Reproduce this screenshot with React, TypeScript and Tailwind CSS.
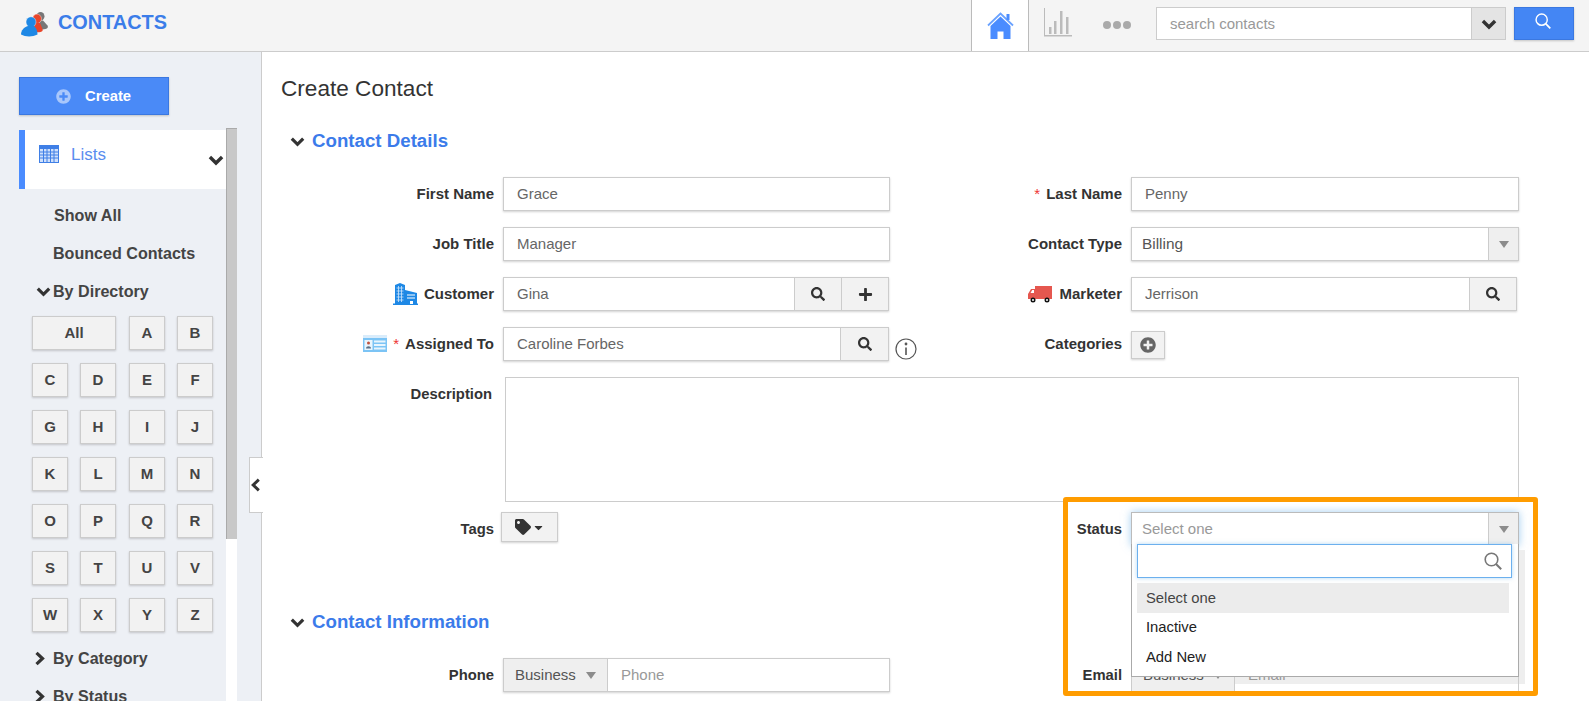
import React from "react";
import { FaSearch, FaPlus, FaPlusCircle, FaTag, FaCaretDown } from "react-icons/fa";

const F = "font-['Liberation_Sans',Arial,sans-serif]";
const box = "border border-[#ccc] shadow-[0_1px_2px_rgba(0,0,0,0.18)]";

function Logo() {
  return (
    <svg width="28" height="25" viewBox="0 0 28 25">
      <ellipse cx="19.500" cy="4.300" rx="4" ry="4.300" fill="#777" />
      <path d="M17 8.500h5l4.500 5c1 1.500 0 3-2 3.500-2 .5-4 .5-6 0z" fill="#777" />
      <ellipse cx="16" cy="6.800" rx="4.500" ry="4.700" fill="#e8452a" stroke="#fff" strokeWidth="0.400" />
      <path d="M13 11h6l2.500 6c.5 1.500 0 2.500-2 3-2 .5-4 .5-7-.5z" fill="#e8452a" />
      <ellipse cx="10" cy="10" rx="5" ry="5.200" fill="#1e88e5" stroke="#fff" strokeWidth="0.400" />
      <path d="M0 22.500c0-4 3-7.500 7-8.500h6c2.500 2 3.500 5 3.500 8.500-5 2.500-12 2.500-16.500 0z" fill="#1e88e5" />
    </svg>
  );
}

function Home() {
  return (
    <svg width="27" height="27" viewBox="0 0 27 27">
      <path d="M1 13.500L13.500 1.500 26 13.500" fill="none" stroke="#6aa2ff" strokeWidth="1.800" />
      <rect x="19.500" y="2" width="3" height="6" fill="#4a8cff" />
      <path d="M3.500 14L13.500 4.500 23.500 14v13H16.500v-7.500h-6V27h-7z" fill="#4a8cff" />
    </svg>
  );
}

function Chev({ dir = "down", size = 15, color = "#333" }: { dir?: "down" | "right" | "left"; size?: number; color?: string }) {
  const d = dir === "down" ? "M1.800 3.200L7.500 8.800 13.200 3.200" : dir === "right" ? "M4.500 1.800L10.500 7.500 4.500 13.200" : "M10.500 1.800L4.500 7.500 10.500 13.200";
  return (
    <svg width={size} height={size} viewBox={dir === "down" ? "0 0 15 12" : "0 0 15 15"} className="shrink-0" fill="none" stroke={color} strokeWidth="3.200">
      <path d={d} />
    </svg>
  );
}

function Chart() {
  return (
    <svg width="28" height="29" viewBox="0 0 28 29" fill="#bbb">
      <rect x="0" y="0" width="1" height="28" />
      <rect x="0" y="27" width="28" height="1.500" />
      <rect x="5" y="19" width="2.500" height="7" />
      <rect x="10" y="13" width="2.500" height="13" />
      <rect x="16" y="3" width="2.500" height="23" />
      <rect x="22" y="9" width="2.500" height="17" />
    </svg>
  );
}

function ThinSearch({ color, size }: { color: string; size: number }) {
  return (
    <svg width={size} height={size} viewBox="0 0 18 18" fill="none" stroke={color} strokeWidth="1.600">
      <circle cx="7.500" cy="7.500" r="6.300" />
      <path d="M12 12l5.200 5.200" strokeWidth="2" />
    </svg>
  );
}

function Calendar() {
  return (
    <svg width="20" height="18" viewBox="0 0 20 18">
      <rect width="20" height="18" fill="#3f7fe6" />
      <rect x="1" y="4" width="18" height="13" fill="#cfe0fb" />
      <path d="M1 7h18M1 10h18M1 13h18M4.500 4v13M8 4v13M11.500 4v13M15 4v13" stroke="#3f7fe6" strokeWidth="1" />
    </svg>
  );
}

function Building() {
  return (
    <svg width="25" height="22" viewBox="0 0 25 22" fill="#1e88e5">
      <path d="M2 2l5-2 5 2v20H2z" />
      <path d="M12 7l12 3v12H12z" />
      <rect x="0" y="20.500" width="25" height="1.500" />
      <path d="M3.500 5h7M3.500 8h7M3.500 11h7M3.500 14h7M3.500 17h7M5.500 3v16M8.500 3v16" stroke="#cfe6fb" strokeWidth="0.800" />
      <path d="M14 12h8M14 15h8" stroke="#fff" strokeWidth="1.200" />
      <rect x="17" y="18" width="3" height="3" fill="#fff" />
    </svg>
  );
}

function Card() {
  return (
    <svg width="24" height="18" viewBox="0 0 24 18">
      <rect width="24" height="3" fill="#d9ecfb" />
      <rect y="3" width="24" height="14" fill="#7cc4f5" />
      <rect x="1.500" y="5" width="8" height="10" fill="#e9f5fd" />
      <circle cx="5.500" cy="8" r="1.500" fill="#c0533f" />
      <path d="M3 13.500c0-3 5-3 5 0z" fill="#5a6f85" />
      <path d="M11 6.500h11.500M11 10h11.500M11 13.500h11.500" stroke="#e9f5fd" strokeWidth="1.800" />
    </svg>
  );
}

function Truck() {
  return (
    <svg width="24" height="17" viewBox="0 0 24 17">
      <path d="M7 0h17v13H0V8l3-5h4z" fill="#e5574f" />
      <path d="M2.500 7l1.700-3H6v3z" fill="#fff" />
      <circle cx="5" cy="14" r="2.500" fill="#111" />
      <circle cx="5" cy="14" r="1" fill="#fff" />
      <circle cx="19" cy="14" r="2.500" fill="#111" />
      <circle cx="19" cy="14" r="1" fill="#fff" />
    </svg>
  );
}

function Info() {
  return (
    <svg width="22" height="22" viewBox="0 0 22 22" fill="none" stroke="#555" strokeWidth="1.200">
      <circle cx="11" cy="11" r="10" />
      <path d="M11 9.500v7.500" strokeWidth="1.600" />
      <circle cx="11" cy="6" r="0.800" fill="#555" />
    </svg>
  );
}

function Arrow() {
  return <div className="w-0 h-0 border-x-[5px] border-x-transparent border-t-[7px] border-t-[#8c8c8c]" />;
}

function Label({ children }: { children: React.ReactNode }) {
  return (
    <div className="w-[232px] mr-[9px] shrink-0 flex items-center justify-end text-[15px] font-bold text-[#333] whitespace-nowrap">
      {children}
    </div>
  );
}

function TextBox({ value, w = "w-[387px]" }: { value: string; w?: string }) {
  return (
    <div className={`${box} ${w} h-[34px] shrink-0 bg-white flex items-center pl-[13px] text-[15px] text-[#666]`}>{value}</div>
  );
}

function IconBtn({ w, children }: { w: string; children: React.ReactNode }) {
  return <div className={`${w} h-full bg-[#f2f2f2] border-l border-[#ccc] flex items-center justify-center text-[#333]`}>{children}</div>;
}

function SectionHead({ title }: { title: string }) {
  return (
    <div className="h-[32px] flex items-center pl-[28px]">
      <Chev size={15} />
      <span className="ml-[7px] text-[18.700px] font-bold text-[#3b7bea]">{title}</span>
    </div>
  );
}

function Row({ left, right, className }: { left: React.ReactNode; right: React.ReactNode; className?: string }) {
  return (
    <div className={`flex ${className ?? "h-[34px] mb-[16px]"}`}>
      <div className="w-[628px] shrink-0 flex">{left}</div>
      <div className="flex-1 flex">{right}</div>
    </div>
  );
}

function Letter({ c, wide }: { c: string; wide?: boolean }) {
  return (
    <div className={wide ? "col-span-2" : ""}>
      <div className={`${box} ${wide ? "w-[84px]" : "w-[36px]"} h-[34px] bg-[#f2f2f2] flex items-center justify-center text-[15px] font-bold text-[#444]`}>{c}</div>
    </div>
  );
}

export default function App() {
  const rows = ["C","D","E","F","G","H","I","J","K","L","M","N","O","P","Q","R","S","T","U","V","W","X","Y","Z"];
  return (
    <div className={`${F} w-[1589px] h-[701px] overflow-hidden flex flex-col bg-white`}>
      <header className="h-[52px] shrink-0 bg-[#f4f4f4] border-b border-[#ccc] flex">
        <div className="ml-[21px] mt-[12px]"><Logo /></div>
        <div className="ml-[9px] mt-[10px] text-[19.900px] leading-[24px] font-bold text-[#3b7de9]">CONTACTS</div>
        <div className="ml-auto flex items-start pr-[15px]">
          <div className="w-[58px] h-[51px] bg-white border-x border-[#bbb] flex items-center justify-center">
            <Home />
          </div>
          <div className="ml-[15px] mt-[8px]"><Chart /></div>
          <div className="ml-[31px] mt-[21px] flex gap-[2px]">
            <span className="w-[8px] h-[8px] rounded-full bg-[#aaa]" />
            <span className="w-[8px] h-[8px] rounded-full bg-[#aaa]" />
            <span className="w-[8px] h-[8px] rounded-full bg-[#aaa]" />
          </div>
          <div className="ml-[25px] mt-[7px] w-[350px] h-[33px] bg-white border border-[#ccc] flex">
            <div className="flex-1 pl-[13px] pt-[2px] flex items-center text-[15px] text-[#999]">search contacts</div>
            <div className="w-[34px] bg-[#e4e4e4] border-l border-[#ccc] flex items-center justify-center">
              <Chev size={16} />
            </div>
          </div>
          <div className="ml-[8px] mt-[7px] w-[60px] h-[33px] bg-[#4486f4] border border-[#3b78e0] flex items-start justify-center pt-[5px] pr-[3px] shadow-[0_1px_2px_rgba(0,0,0,0.2)]">
            <ThinSearch color="#fff" size={16} />
          </div>
        </div>
      </header>
      <div className="relative flex-1 flex min-h-0">
        <aside className="w-[262px] shrink-0 bg-[#edf0f5] border-r border-[#ccc] flex flex-col">
          <div className="ml-[19px] mt-[25px] w-[150px] h-[38px] bg-[#4a8af7] border border-[#3b78e0] shadow-[0_1px_2px_rgba(0,0,0,0.2)] flex items-center pl-[36px] text-[14.800px] font-bold text-white">
            <FaPlusCircle className="text-[#a9c7fb] text-[15px] mr-[14px]" />
            Create
          </div>
          <div className="mt-[13px] flex flex-1 min-h-0">
            <div className="w-[226px] shrink-0 pt-[2px]">
              <div className="ml-[19px] h-[59px] bg-white border-l-[6px] border-[#4a8cff] flex items-start pl-[14px] pt-[15px]">
                <Calendar />
                <span className="ml-[12px] text-[17px] leading-[19px] text-[#5a8def]">Lists</span>
                <span className="ml-auto mr-[2px] mt-[7px]"><Chev size={16} /></span>
              </div>
              <div className="mt-[7px] h-[38px] pl-[54px] flex items-center text-[16.100px] font-bold text-[#444]">Show All</div>
              <div className="h-[38px] pl-[53px] flex items-center text-[16.100px] font-bold text-[#444] whitespace-nowrap">Bounced Contacts</div>
              <div className="h-[38px] pl-[36px] flex items-center text-[16.100px] font-bold text-[#444]">
                <Chev size={15} /><span className="ml-[2px]">By Directory</span>
              </div>
              <div className="mt-[6px] ml-[32px] grid grid-cols-[48px_49px_48px_36px] gap-y-[13px]">
                <Letter c="All" wide />
                <Letter c="A" />
                <Letter c="B" />
                {rows.map((c) => <Letter key={c} c={c} />)}
              </div>
              <div className="mt-[7px] h-[38px] pl-[32px] flex items-center text-[16.100px] font-bold text-[#444]">
                <Chev dir="right" size={15} /><span className="ml-[6px]">By Category</span>
              </div>
              <div className="h-[38px] pl-[32px] flex items-center text-[16.100px] font-bold text-[#444]">
                <Chev dir="right" size={15} /><span className="ml-[6px]">By Status</span>
              </div>
            </div>
            <div className="w-[11px] bg-white">
              <div className="h-[411px] bg-[#c8c8c8] border-l border-t border-[#aaa]" />
            </div>
          </div>
        </aside>
        <div className="absolute left-[249px] top-[405px] w-[14px] h-[56px] bg-white border border-r-0 border-[#ccc] flex items-center justify-end z-10">
          <Chev dir="left" size={14} />
        </div>
        <main className="relative flex-1 min-w-0">
          <h1 className="ml-[19px] mt-[21px] h-[32px] flex items-center text-[22.600px] font-normal text-[#333]">Create Contact</h1>
          <div className="mt-[20px]"><SectionHead title="Contact Details" /></div>
          <div className="mt-[20px]">
            <Row
              left={<><Label>First Name</Label><TextBox value="Grace" /></>}
              right={<><Label><span className="text-[#e33] font-normal mr-[6px]">*</span>Last Name</Label><TextBox value="Penny" w="w-[388px]" /></>}
            />
            <Row
              left={<><Label>Job Title</Label><TextBox value="Manager" /></>}
              right={<><Label>Contact Type</Label>
                <div className={`${box} h-[34px] w-[388px] shrink-0 bg-white flex text-[15.400px] text-[#555]`}>
                  <div className="flex-1 pl-[10px] flex items-center">Billing</div>
                  <div className="w-[30px] bg-[#efefef] border-l border-[#ccc] flex items-center justify-center"><Arrow /></div>
                </div></>}
            />
            <Row
              left={<><Label><span className="mr-[6px]"><Building /></span>Customer</Label>
                <div className={`${box} h-[34px] w-[386px] shrink-0 bg-white flex text-[15px] text-[#666]`}>
                  <div className="flex-1 pl-[13px] flex items-center">Gina</div>
                  <IconBtn w="w-[47px]"><FaSearch className="text-[14px]" /></IconBtn>
                  <IconBtn w="w-[47px]"><FaPlus className="text-[15px]" /></IconBtn>
                </div></>}
              right={<><Label><span className="mr-[7px]"><Truck /></span>Marketer</Label>
                <div className={`${box} h-[34px] w-[386px] shrink-0 bg-white flex text-[15px] text-[#666]`}>
                  <div className="flex-1 pl-[13px] flex items-center">Jerrison</div>
                  <IconBtn w="w-[47px]"><FaSearch className="text-[14px]" /></IconBtn>
                </div></>}
            />
            <Row
              left={<><Label><span className="mr-[6px]"><Card /></span><span className="text-[#e33] font-normal mr-[6px]">*</span>Assigned To</Label>
                <div className={`${box} h-[34px] w-[386px] shrink-0 bg-white flex text-[15px] text-[#666]`}>
                  <div className="flex-1 pl-[13px] flex items-center">Caroline Forbes</div>
                  <IconBtn w="w-[48px]"><FaSearch className="text-[14px]" /></IconBtn>
                </div>
                <div className="ml-[6px] mt-[11px] shrink-0"><Info /></div></>}
              right={<><Label>Categories</Label>
                <div className={`${box} mt-[4px] h-[28px] w-[34px] bg-[#f2f2f2] flex items-center justify-center`}>
                  <FaPlusCircle className="text-[#666] text-[16px]" />
                </div></>}
            />
          </div>
          <div className="flex h-[125px]">
            <div className="w-[230px] pt-[6px] text-right text-[14.800px] font-bold text-[#333]">Description</div>
            <div className="ml-[13px] w-[1014px] border border-[#ccc] bg-white" />
          </div>
          <Row
            className="mt-[10px] h-[32px]"
            left={<><div className="w-[232px] h-[34px] flex items-center justify-end text-[14.800px] font-bold text-[#333]">Tags</div>
              <div className={`${box} ml-[7px] w-[57px] h-[30px] bg-[#f2f2f2] flex items-center justify-center text-[#333]`}>
                <FaTag className="text-[16px]" /><FaCaretDown className="text-[13px] ml-px" />
              </div></>}
            right={<><div className="w-[232px] mr-[9px] h-[34px] flex items-center justify-end text-[14.800px] font-bold text-[#333]">Status</div>
              <div className="relative w-[388px] h-[34px]">
                <div className="h-[34px] bg-white border border-[#bbb] shadow-[0_0_8px_rgba(102,175,233,0.6)] flex text-[15px] text-[#999]">
                  <div className="flex-1 pl-[10px] pt-[1px] flex items-center">Select one</div>
                  <div className="w-[30px] bg-[#efefef] border-l border-[#ccc] flex items-center justify-center"><Arrow /></div>
                </div>
                <div className="absolute left-[5px] top-[38px] w-[389px] h-[134px] bg-[#eee] z-0" />
                <div className="absolute left-0 right-0 top-[32px] h-[133px] bg-white border border-t-0 border-[#aaa] z-20">
                  <div className="ml-[5px] w-[375px] h-[34px] bg-white border border-[#6cb0ee] shadow-[0_0_4px_rgba(102,175,233,0.5)] flex items-center justify-end pr-[9px]">
                    <ThinSearch color="#777" size={18} />
                  </div>
                  <div className="mt-[5px] ml-[5px] w-[372px] h-[30px] bg-[#ececec] flex items-center pl-[9px] text-[14.800px] text-[#444]">Select one</div>
                  <div className="ml-[5px] h-[29px] flex items-center pl-[9px] text-[14.800px] text-[#222]">Inactive</div>
                  <div className="ml-[5px] h-[30px] flex items-center pl-[9px] text-[14.800px] text-[#222]">Add New</div>
                </div>
              </div></>}
          />
          <div className="mt-[62px]"><SectionHead title="Contact Information" /></div>
          <Row
            className="relative z-10 mt-[20px] h-[34px]"
            left={<><div className="w-[232px] flex items-center justify-end text-[14.800px] font-bold text-[#333]">Phone</div>
              <div className={`${box} ml-[9px] w-[387px] h-[34px] flex text-[15px]`}>
                <div className="w-[104px] bg-[#efefef] border-r border-[#ccc] flex items-center justify-between pl-[11px] pr-[11px] text-[#555]">Business<Arrow /></div>
                <div className="flex-1 bg-white pl-[13px] flex items-center text-[#999]">Phone</div>
              </div></>}
            right={<><div className="w-[232px] mr-[9px] shrink-0 flex items-center justify-end text-[14.800px] font-bold text-[#333]">Email</div>
              <div className="w-[388px] shrink-0 h-[34px] border border-[#ccc] flex text-[15px]">
                <div className="w-[103px] bg-[#efefef] border-r border-[#ccc] flex items-center justify-between pl-[11px] pr-[11px] text-[#555]">Business<Arrow /></div>
                <div className="flex-1 pl-[13px] flex items-center text-[#999]">Email</div>
              </div></>}
          />
          <div className="absolute left-[801px] top-[445px] w-[475px] h-[199px] border-[5px] border-[#ff9c00] rounded-[3px] z-30 pointer-events-none" />
        </main>
      </div>
    </div>
  );
}
